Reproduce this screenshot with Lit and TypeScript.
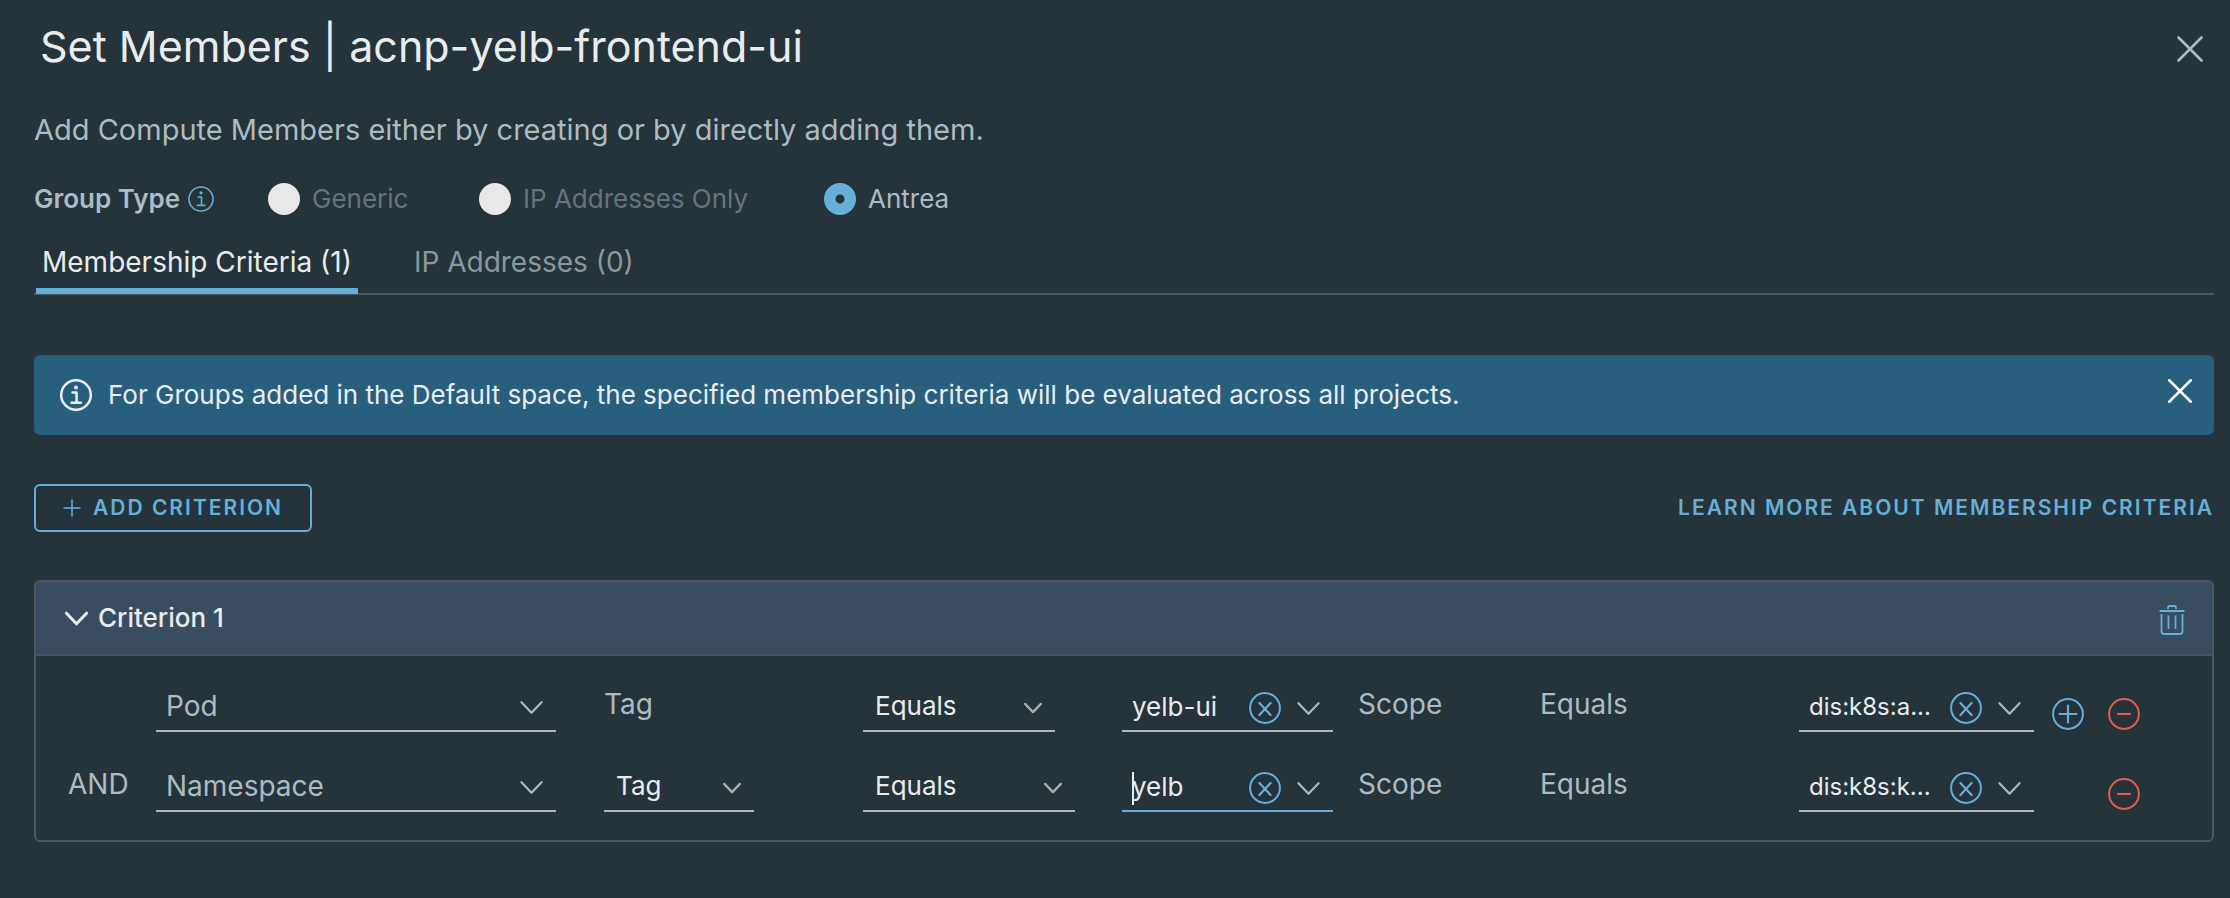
import { LitElement, html, css, svg, nothing } from "lit";
import { customElement, property } from "lit/decorators.js";
import { classMap } from "lit/directives/class-map.js";

interface Rule {
  join: string;
  type: string;
  key: string;
  keyEditable: boolean;
  wideOperator: boolean;
  value: string;
  focused: boolean;
  scope: string;
  canAdd: boolean;
}

const RULES: Rule[] = [
  { join: "", type: "Pod", key: "Tag", keyEditable: false, wideOperator: false, value: "yelb-ui", focused: false, scope: "dis:k8s:a...", canAdd: true },
  { join: "AND", type: "Namespace", key: "Tag", keyEditable: true, wideOperator: true, value: "yelb", focused: true, scope: "dis:k8s:k...", canAdd: false },
];

const chevron = (size: number, stroke: number) => html`
  <svg class="chevron" width=${size} height=${size} viewBox="0 0 24 24" aria-hidden="true">
    ${svg`<path d="M1.5 6.5 L12 17.5 L22.5 6.5" fill="none" stroke="currentColor" stroke-width=${stroke} stroke-linecap="round" stroke-linejoin="round"/>`}
  </svg>`;

const cross = (size: number, stroke: number) => html`
  <svg width=${size} height=${size} viewBox="0 0 26 26" aria-hidden="true">
    <path d="M1.5 1.5 L24.5 24.5 M24.5 1.5 L1.5 24.5" fill="none" stroke="currentColor" stroke-width=${stroke} stroke-linecap="round"/>
  </svg>`;

const info = (size: number, stroke: number) => html`
  <svg width=${size} height=${size} viewBox="0 0 32 32" aria-hidden="true">
    <circle cx="16" cy="16" r="14.8" fill="none" stroke="currentColor" stroke-width=${stroke}/>
    <circle cx="16" cy="8.4" r="2" fill="currentColor"/>
    <path d="M12.5 13.5 H16.6 V23.5 M11.5 23.8 H21" fill="none" stroke="currentColor" stroke-width=${stroke} stroke-linecap="round" stroke-linejoin="round"/>
  </svg>`;

const circled = (d: string) => html`
  <svg width="32" height="32" viewBox="0 0 32 32" aria-hidden="true">
    <circle cx="16" cy="16" r="14.9" fill="none" stroke="currentColor" stroke-width="2"/>
    <path d=${d} fill="none" stroke="currentColor" stroke-width="2.2" stroke-linecap="round"/>
  </svg>`;

const base = css`
  *, *::before, *::after { box-sizing: border-box; }
  button, input, select { font: inherit; color: inherit; margin: 0; padding: 0; border: 0; background: none; border-radius: 0; outline: none; }
  button { cursor: pointer; }
  svg { display: block; flex: none; }
`;

@customElement("criterion-rule")
class CriterionRule extends LitElement {
  @property({ attribute: false }) rule!: Rule;

  static styles = [base, css`
    :host {
      display: grid;
      grid-template-columns: 88px minmax(0, 448fr) minmax(0, 259fr) minmax(0, 259fr) minmax(0, 236fr) minmax(0, 182fr) minmax(0, 259fr) minmax(0, 253fr) 160px;
      height: 52px;
    }
    .label { font-size: 28px; line-height: 48px; white-space: nowrap; }
    .field { position: relative; display: flex; height: 52px; border-bottom: 2px solid #adb8c4; }
    .field select, .field input { width: 100%; min-width: 0; height: 52px; font-size: 26px; color: #e9ecef; }
    .field select { appearance: none; padding-left: 12px; }
    .field option { background: #25333a; }
    .type { margin-right: 48px; }
    .type select { font-size: 28px; color: #adbbc4; padding-left: 10px; }
    .key { width: 150px; }
    .operator { width: 192px; }
    .operator.wide { width: 212px; }
    .value { margin-right: 25px; }
    .scope { margin-right: 18px; }
    .value, .scope { padding-left: 10px; }
    .scope input { font-size: 24px; }
    .focused { border-bottom-color: #65afd9; }
    .focused input { caret-color: transparent; }
    .caret { position: absolute; left: 10px; top: 12px; width: 2px; height: 33px; background: #e9ecef; }
    .mark { position: absolute; right: 13px; top: 16px; pointer-events: none; }
    .type .mark { color: #adbbc4; }
    .key .mark, .operator .mark { top: 19px; color: #a9aeb1; }
    .tools { display: flex; flex: none; align-items: center; gap: 16px; padding: 6px 13px 0 4px; }
    .clear { color: #65afd9; }
    .actions { display: flex; align-items: flex-end; gap: 24px; padding-bottom: 2px; }
    .actions button { width: 32px; height: 32px; }
    .add { color: #65afd9; }
    .remove { color: #e35c50; }
    .blank { width: 32px; }
  `];

  private combo(kind: string, name: string, value: string, focused: boolean) {
    return html`
      <div class=${classMap({ field: true, [kind]: true, focused })}>
        <input type="text" aria-label=${name} .value=${value}>
        ${focused ? html`<span class="caret"></span>` : nothing}
        <div class="tools">
          <button class="clear" aria-label="Clear ${name}">${circled("M10.4 11 L21.6 23 M21.6 11 L10.4 23")}</button>
          <button aria-label="Open ${name}">${chevron(23, 2.2)}</button>
        </div>
      </div>`;
  }

  render() {
    const r = this.rule;
    return html`
      <span class="label">${r.join}</span>
      <div class="field type">
        <select aria-label="Member type"><option>${r.type}</option></select>
        <span class="mark">${chevron(23, 2.2)}</span>
      </div>
      ${r.keyEditable
        ? html`<div class="field key">
            <select aria-label="Property"><option>${r.key}</option></select>
            <span class="mark">${chevron(18, 3)}</span>
          </div>`
        : html`<span class="label">${r.key}</span>`}
      <div class=${classMap({ field: true, operator: true, wide: r.wideOperator })}>
        <select aria-label="Operator"><option>Equals</option></select>
        <span class="mark">${chevron(18, 3)}</span>
      </div>
      ${this.combo("value", "Tag value", r.value, r.focused)}
      <span class="label">Scope</span>
      <span class="label">Equals</span>
      ${this.combo("scope", "Scope value", r.scope, false)}
      <div class="actions">
        ${r.canAdd
          ? html`<button class="add" aria-label="Add condition">${circled("M16 7.5 V24.5 M7.5 16 H24.5")}</button>`
          : html`<span class="blank"></span>`}
        <button class="remove" aria-label="Remove condition">${circled("M9.8 16 H22.2")}</button>
      </div>`;
  }
}

@customElement("app-root")
class AppRoot extends LitElement {
  static styles = [base, css`
    :host {
      display: block;
      min-height: 100vh;
      padding: 18px 16px 56px 34px;
      background: #25333a;
      color: #adbbc4;
      font-family: Inter, "Open Sans", sans-serif;
      font-size: 26px;
      line-height: 34px;
      box-sizing: border-box;
    }
    .head { display: flex; justify-content: space-between; align-items: center; padding: 0 11px 0 6px; }
    h1 { margin: 0; font-size: 43px; line-height: 56px; font-weight: 400; color: #e9ecef; }
    .head button { padding-top: 6px; color: #adbbc4; }
    .intro { margin: 38px 0 0; font-size: 29px; line-height: 36px; }
    .types { display: flex; align-items: center; height: 32px; margin: 35px 0 0; padding: 0; border: 0; }
    .caption { display: flex; align-items: center; gap: 8px; width: 234px; font-weight: 600; }
    .caption svg { color: #65afd9; }
    .option { display: flex; align-items: center; gap: 12px; }
    .option.generic { width: 211px; }
    .option.addresses { width: 345px; }
    .option input { appearance: none; width: 32px; height: 32px; border-radius: 50%; background: #e8e8e8; }
    .option input:checked { background: radial-gradient(circle, #25333a 0 4px, #65afd9 5px); }
    .off { color: #66757d; }
    .tabs { display: flex; gap: 50px; height: 56px; margin-top: 24px; padding-left: 2px; box-shadow: inset 0 -2px #495761; }
    .tab { height: 55px; padding: 6px 6px 9px; border-bottom: 6px solid transparent; font-size: 28px; line-height: 34px; color: #8b989f; }
    .tab.active { border-bottom-color: #65afd9; color: #e9ecef; }
    .banner { display: flex; align-items: center; gap: 16px; min-height: 80px; margin-top: 60px; padding: 0 22px 0 26px; border-radius: 6px; background: #295f7e; color: #e9ecef; }
    .banner p { flex: 1; margin: 0; }
    .banner button { padding-bottom: 8px; color: #fff; }
    .bar { display: flex; justify-content: space-between; align-items: center; margin-top: 49px; color: #65afd9; font-size: 21px; font-weight: 600; letter-spacing: 2px; }
    .bar button { display: flex; align-items: center; gap: 11px; height: 48px; padding: 0 27px 0 26px; border: 2px solid #65afd9; border-radius: 6px; letter-spacing: inherit; }
    .bar a { color: inherit; text-decoration: none; }
    .card { margin-top: 48px; border: 2px solid #495761; border-radius: 6px; overflow: hidden; }
    .cardhead { display: flex; justify-content: space-between; align-items: center; height: 74px; padding: 0 27px 0 29px; border-bottom: 2px solid #495761; background: #394d61; color: #e9ecef; }
    .toggle { display: flex; align-items: center; gap: 10px; font-weight: 500; }
    .trash { padding-top: 4px; color: #65afd9; }
    .rules { display: grid; gap: 28px; padding: 24px 0 28px 32px; }
  `];

  render() {
    return html`
      <header class="head">
        <h1>Set Members | acnp-yelb-frontend-ui</h1>
        <button aria-label="Close">${cross(26, 2.6)}</button>
      </header>
      <p class="intro">Add Compute Members either by creating or by directly adding them.</p>
      <div class="types" role="radiogroup" aria-labelledby="group-type">
        <span class="caption"><span id="group-type">Group Type</span>${info(26, 2)}</span>
        <label class="option generic off"><input type="radio" name="group" disabled>Generic</label>
        <label class="option addresses off"><input type="radio" name="group" disabled>IP Addresses Only</label>
        <label class="option"><input type="radio" name="group" checked>Antrea</label>
      </div>
      <div class="tabs" role="tablist">
        <button class="tab active" role="tab" aria-selected="true">Membership Criteria (1)</button>
        <button class="tab" role="tab" aria-selected="false">IP Addresses (0)</button>
      </div>
      <div class="banner" role="status">
        ${info(32, 2.5)}
        <p>For Groups added in the Default space, the specified membership criteria will be evaluated across all projects.</p>
        <button aria-label="Dismiss">${cross(24, 3)}</button>
      </div>
      <div class="bar">
        <button>
          <svg width="20" height="20" viewBox="0 0 20 20" aria-hidden="true"><path d="M10 1.5 V18.5 M1.5 10 H18.5" stroke="currentColor" stroke-width="1.6"/></svg>
          ADD CRITERION
        </button>
        <a href="#criteria">LEARN MORE ABOUT MEMBERSHIP CRITERIA</a>
      </div>
      <section class="card" id="criteria">
        <div class="cardhead">
          <button class="toggle" aria-expanded="true">${chevron(23, 3.2)}Criterion 1</button>
          <button class="trash" aria-label="Delete criterion">
            <svg width="26" height="30" viewBox="0 0 26 30" aria-hidden="true">
              <path d="M0.5 6 H25.5 M9 4 V2.5 Q9 1 10.5 1 H15.5 Q17 1 17 2.5 V4 M2.5 9 V26.5 Q2.5 29 5 29 H21 Q23.5 29 23.5 26.5 V9 M9.5 10.5 V24 M16.5 10.5 V24" fill="none" stroke="currentColor" stroke-width="1.8"/>
            </svg>
          </button>
        </div>
        <div class="rules">
          ${RULES.map((rule) => html`<criterion-rule .rule=${rule}></criterion-rule>`)}
        </div>
      </section>`;
  }
}
